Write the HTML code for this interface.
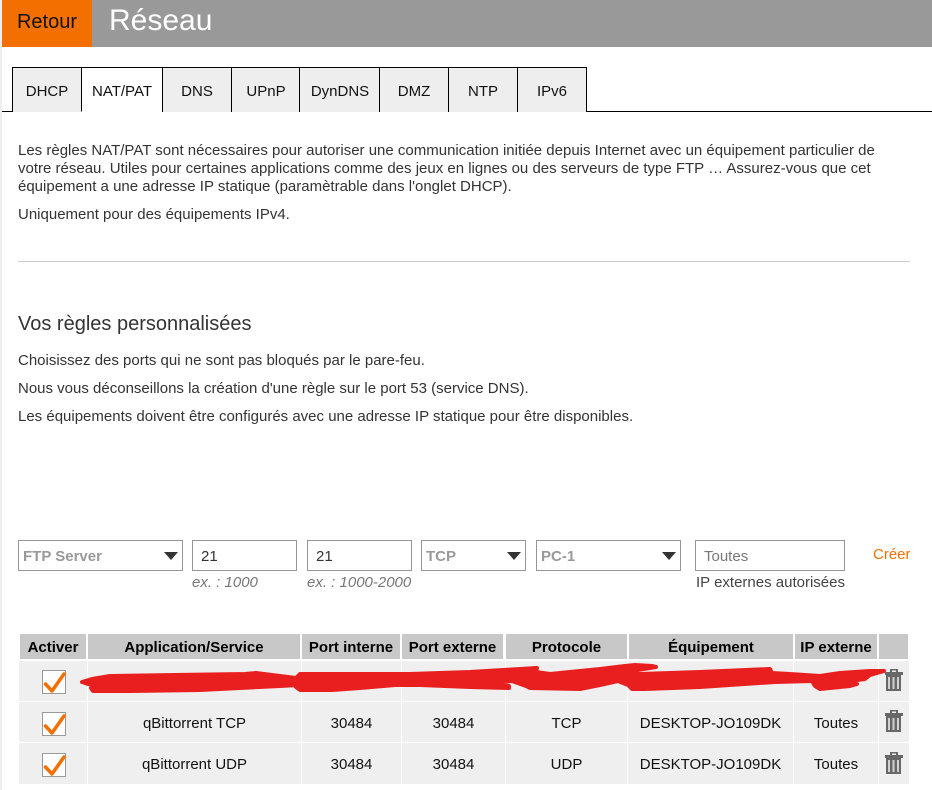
<!DOCTYPE html>
<html lang="fr"><head><meta charset="utf-8"><title>Réseau</title>
<style>
html,body{margin:0;padding:0;background:#fff}
#p{position:relative;width:932px;height:790px;overflow:hidden;background:#fff;font-family:"Liberation Sans",sans-serif;font-size:15px;color:#000}
#p div{position:absolute;box-sizing:border-box}
.t{white-space:nowrap;line-height:18px}
.tab{top:67px;height:45px;border-top:1px solid #000;border-left:1px solid #000;background:#eee;text-align:center;line-height:46px;padding-top:1px;font-size:15px;color:#111}
.sel,.inp{top:540px;height:31px;border:1px solid #969696;background:#fff;line-height:29px;padding-left:4px;padding-top:1px}
.sel{font-weight:bold;color:#999}
.inp{padding-left:8px;color:#333}
.tri{top:11px;right:4px;width:0;height:0;border-left:7.5px solid transparent;border-right:7.5px solid transparent;border-top:8px solid #333}
.h{top:634px;height:25px;background:#c8c8c8;font-weight:bold;text-align:center;line-height:26px;padding-top:1px;font-size:15px;color:#000}
.c{background:#efefef;text-align:center;font-size:15px;line-height:41px;padding-top:1px;color:#111;white-space:nowrap}
.cb{left:42px;width:24px;height:24px;border:1px solid #999;background:#fff}
svg{position:absolute;display:block}
</style></head><body><div id="p">
<div style="left:0;top:0;width:2px;height:790px;background:#eee"></div>
<div style="left:2px;top:0;width:930px;height:47px;background:#999"></div>
<div style="left:2px;top:0;width:90px;height:47px;background:#f37000;text-align:center;font-size:20px;line-height:44px;color:#111">Retour</div>
<div class="t" style="left:109px;top:4px;font-size:30px;line-height:34px;color:#fff">Réseau</div>

<div style="left:2px;top:111px;width:930px;height:1px;background:#000"></div>
<div class="tab" style="left:12px;width:69px">DHCP</div>
<div class="tab" style="left:81px;width:81px;background:#fff;height:45px;border-bottom:1px solid #fff">NAT/PAT</div>
<div class="tab" style="left:162px;width:69px">DNS</div>
<div class="tab" style="left:231px;width:69px">UPnP</div>
<div class="tab" style="left:299px;width:81px">DynDNS</div>
<div class="tab" style="left:379px;width:69px">DMZ</div>
<div class="tab" style="left:448px;width:69px">NTP</div>
<div class="tab" style="left:517px;width:70px;border-right:1px solid #000">IPv6</div>

<div class="t" style="left:18px;top:142px;color:#333">Les règles NAT/PAT sont nécessaires pour autoriser une communication initiée depuis Internet avec un équipement particulier de</div>
<div class="t" style="left:18px;top:160px;color:#333">votre réseau. Utiles pour certaines applications comme des jeux en lignes ou des serveurs de type FTP … Assurez-vous que cet</div>
<div class="t" style="left:18px;top:178px;color:#333">équipement a une adresse IP statique (paramètrable dans l'onglet DHCP).</div>
<div class="t" style="left:18px;top:206px;color:#333">Uniquement pour des équipements IPv4.</div>
<div style="left:18px;top:261px;width:892px;height:1px;background:#ccc"></div>
<div class="t" style="left:18px;top:312px;font-size:20px;line-height:24px;color:#333">Vos règles personnalisées</div>
<div class="t" style="left:18px;top:352px;color:#333">Choisissez des ports qui ne sont pas bloqués par le pare-feu.</div>
<div class="t" style="left:18px;top:380px;color:#333">Nous vous déconseillons la création d'une règle sur le port 53 (service DNS).</div>
<div class="t" style="left:18px;top:408px;color:#333">Les équipements doivent être configurés avec une adresse IP statique pour être disponibles.</div>

<div class="sel" style="left:18px;width:165px">FTP Server<div class="tri"></div></div>
<div class="inp" style="left:192px;width:105px">21</div>
<div class="inp" style="left:307px;width:105px">21</div>
<div class="sel" style="left:421px;width:105px">TCP<div class="tri"></div></div>
<div class="sel" style="left:536px;width:145px">PC-1<div class="tri"></div></div>
<div class="inp" style="left:695px;width:150px;color:#777">Toutes</div>
<div class="t" style="left:873px;top:546px;color:#f37000">Créer</div>
<div class="t" style="left:192px;top:574px;font-style:italic;color:#777">ex. : 1000</div>
<div class="t" style="left:307px;top:574px;font-style:italic;color:#777">ex. : 1000-2000</div>
<div class="t" style="left:696px;top:574px;color:#444">IP externes autorisées</div>

<div class="h" style="left:20px;width:66px">Activer</div>
<div class="h" style="left:88px;width:212px">Application/Service</div>
<div class="h" style="left:302px;width:98px">Port interne</div>
<div class="h" style="left:402px;width:101px">Port externe</div>
<div class="h" style="left:506px;width:121px">Protocole</div>
<div class="h" style="left:629px;width:164px">Équipement</div>
<div class="h" style="left:795px;width:82px">IP externe</div>
<div class="h" style="left:879px;width:29px"></div>

<div class="c" style="left:19px;top:661px;width:68px;height:40px"></div>
<div class="c" style="left:88px;top:661px;width:213px;height:40px"></div>
<div class="c" style="left:302px;top:661px;width:99px;height:40px"></div>
<div class="c" style="left:402px;top:661px;width:103px;height:40px"></div>
<div class="c" style="left:506px;top:661px;width:121px;height:40px"></div>
<div class="c" style="left:628px;top:661px;width:165px;height:40px"></div>
<div class="c" style="left:794px;top:661px;width:84px;height:40px"></div>
<div class="c" style="left:879px;top:661px;width:30px;height:40px"></div>

<div class="c" style="left:19px;top:702px;width:68px;height:40px"></div>
<div class="c" style="left:88px;top:702px;width:213px;height:40px">qBittorrent TCP</div>
<div class="c" style="left:302px;top:702px;width:99px;height:40px">30484</div>
<div class="c" style="left:402px;top:702px;width:103px;height:40px">30484</div>
<div class="c" style="left:506px;top:702px;width:121px;height:40px">TCP</div>
<div class="c" style="left:628px;top:702px;width:165px;height:40px">DESKTOP-JO109DK</div>
<div class="c" style="left:794px;top:702px;width:84px;height:40px">Toutes</div>
<div class="c" style="left:879px;top:702px;width:30px;height:40px"></div>

<div class="c" style="left:19px;top:743px;width:68px;height:41px"></div>
<div class="c" style="left:88px;top:743px;width:213px;height:41px">qBittorrent UDP</div>
<div class="c" style="left:302px;top:743px;width:99px;height:41px">30484</div>
<div class="c" style="left:402px;top:743px;width:103px;height:41px">30484</div>
<div class="c" style="left:506px;top:743px;width:121px;height:41px">UDP</div>
<div class="c" style="left:628px;top:743px;width:165px;height:41px">DESKTOP-JO109DK</div>
<div class="c" style="left:794px;top:743px;width:84px;height:41px">Toutes</div>
<div class="c" style="left:879px;top:743px;width:30px;height:41px"></div>

<div class="cb" style="top:670px"></div>
<div class="cb" style="top:712px"></div>
<div class="cb" style="top:753px"></div>

<svg style="left:0;top:0" width="932" height="790" viewBox="0 0 932 790">
<g fill="none" stroke="#f37000" stroke-width="3.500" stroke-linecap="round" stroke-linejoin="round">
<path d="M45.500 684 L52 691 L64 674"/>
<path d="M45.500 726 L52 733 L64 716"/>
<path d="M45.500 767 L52 774 L64 757"/>
</g>
<g transform="translate(0,0)"><path fill="#676767" fill-rule="evenodd" d="M890 672V669h8v3h5v3h-18v-3zM892 670.500v1.500h4v-1.500z"/><rect x="886" y="675" width="15" height="16" fill="#676767"/><path fill="#d0d0d0" d="M888 677h2v12h-2zM892.500 677h2v12h-2zM897 677h2v12h-2z"/></g>
<g transform="translate(0,41)"><path fill="#676767" fill-rule="evenodd" d="M890 672V669h8v3h5v3h-18v-3zM892 670.500v1.500h4v-1.500z"/><rect x="886" y="675" width="15" height="16" fill="#676767"/><path fill="#d0d0d0" d="M888 677h2v12h-2zM892.500 677h2v12h-2zM897 677h2v12h-2z"/></g>
<g transform="translate(0,83)"><path fill="#676767" fill-rule="evenodd" d="M890 672V669h8v3h5v3h-18v-3zM892 670.500v1.500h4v-1.500z"/><rect x="886" y="675" width="15" height="16" fill="#676767"/><path fill="#d0d0d0" d="M888 677h2v12h-2zM892.500 677h2v12h-2zM897 677h2v12h-2z"/></g>
<path fill="#e91e1e" stroke="#e91e1e" stroke-width="4" stroke-linejoin="round" d="M82 682 L92 679 L110 676 L175 675 L245 674 L256 673 L280 676 L296 678 L300 674 L345 674 L410 674 L470 672 L520 669 L537 668 L536 672 L550 674 L600 669 L625 666 L635 665 L652 666 L656 667 L632 671 L640 674 L700 672 L770 669 L772 673 L790 674 L820 676 L840 673 L870 671 L884 671 L870 675 L865 679 L850 681 L857 684 L850 686 L830 688 L820 689 L815 686 L812 681 L775 682 L700 687 L645 689 L632 689 L628 685 L618 681 L600 685 L580 689 L530 688 L526 686 L512 681 L495 682 L509 686 L509 688 L470 687 L420 685 L395 685 L360 688 L332 690 L300 690 L296 687 L298 685 L280 686 L200 690 L130 691 L93 691 L91 688 L95 685 L88 684 Z"/>
</svg>
</div></body></html>
